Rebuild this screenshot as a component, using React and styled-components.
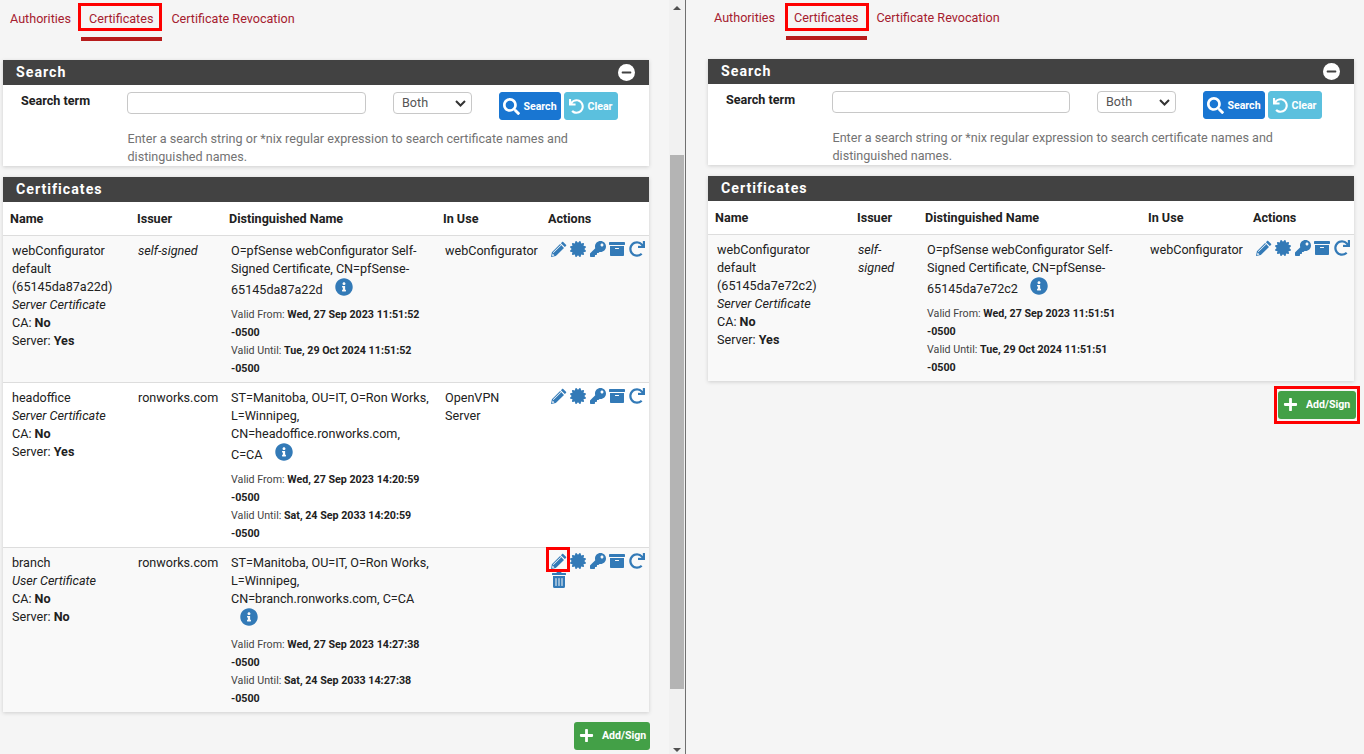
import React from 'react';
import styled, { createGlobalStyle } from 'styled-components';
import { FaCertificate, FaKey, FaArchive, FaRedo, FaTrashAlt, FaInfoCircle, FaSearch, FaUndo, FaPlus, FaMinus } from 'react-icons/fa';

const Global = createGlobalStyle`
  html, body { margin: 0; padding: 0; height: 100%; overflow: hidden; background: #f5f5f5; }
  body { font-family: Roboto, "Liberation Sans", sans-serif; font-size: 12.6px; line-height: 18px; color: #212121; }
`;

const Screen = styled.div`display: flex; width: 1364px; height: 754px; overflow: hidden;`;
const Pane = styled.div`
  flex: ${(props) => (props.$width ? `0 0 ${props.$width}px` : '1 1 0')};
  padding: ${(props) => props.$top}px 0 0 ${(props) => props.$left}px;
  box-sizing: border-box;
  min-width: 0;
  height: 754px;
  overflow: hidden;
`;
const Scrollbar = styled.div`
  flex: 0 0 16px;
  height: 754px;
  background: #f1f1f1;
  display: flex;
  flex-direction: column;
  align-items: center;
  box-sizing: border-box;
  padding-top: 6px;
`;
const ArrowUp = styled.div`width: 0; height: 0; border: 4px solid transparent; border-top: 0; border-bottom: 4px solid #505050;`;
const ArrowDown = styled.div`width: 0; height: 0; border: 4px solid transparent; border-bottom: 0; border-top: 4px solid #505050; margin-top: 59px;`;
const Thumb = styled.div`width: 14px; height: 534px; margin-top: 145px; background: #b4b4b4; flex: none;`;
const Divider = styled.div`flex: 0 0 1px; background: #707070; height: 754px;`;

const Tabs = styled.nav`display: flex; align-items: flex-start; height: 41px;`;
const Tab = styled.a`
  position: relative;
  display: block;
  box-sizing: border-box;
  padding: 9px ${(props) => props.$pr}px 0 ${(props) => props.$pl}px;
  height: 40px;
  color: #a5202f;
  border-bottom: ${(props) => (props.$active ? '4px solid #b71c1c' : '4px solid transparent')};
`;
const Mark = styled.span`
  position: absolute;
  border: 3px solid #fe0000;
  box-sizing: border-box;
  pointer-events: none;
  left: ${(props) => props.$l}px;
  top: ${(props) => props.$t}px;
  width: ${(props) => props.$w}px;
  height: ${(props) => props.$h}px;
`;

const Panel = styled.section`
  width: 646px;
  background: #fff;
  box-shadow: 0 1px 4px rgba(0,0,0,.16);
  margin-bottom: 11px;
`;
const Heading = styled.h2`
  margin: 0;
  height: 25px;
  background: #424242;
  color: #fff;
  font-size: 14.2px;
  font-weight: 700;
  letter-spacing: 1px;
  line-height: 25px;
  padding: 0 14px 0 13px;
  display: flex;
  justify-content: space-between;
  align-items: center;
`;
const Collapse = styled.span`
  width: 17px; height: 17px; border-radius: 50%; background: #fff; color: #424242;
  display: flex; align-items: center; justify-content: center; font-size: 11px;
`;
const SearchBody = styled.div`
  height: 81px;
  box-sizing: border-box;
  padding-top: 7px;
  display: grid;
  grid-template-columns: 124px ${(props) => props.$input}px 27px 79px 27px 62px 3px 54px;
  grid-template-rows: 28px 1fr;
`;
const Label = styled.label`font-weight: 700; padding: 1px 0 0 18px; line-height: 16px;`;
const TextInput = styled.input`
  box-sizing: border-box; width: 100%; height: 22px; border: 1px solid #c8c8c8; border-radius: 4px; background: #fff; margin: 0;
`;
const SelectBox = styled.div`
  box-sizing: border-box; width: 79px; height: 22px; border: 1px solid #c8c8c8; border-radius: 4px; background: #fff;
  display: flex; align-items: center; justify-content: space-between; padding: 0 5px 0 8px; color: #555; font-size: 12.6px;
`;
const Spacer = styled.span``;
const Btn = styled.button`
  box-sizing: border-box; height: 28px; border: 1px solid ${(props) => props.$bg}; border-radius: 3px; background: ${(props) => props.$bg};
  color: #fff; padding: 0; margin: 0; display: flex; align-items: center; justify-content: center; gap: 3px;
  font: 700 10.6px Roboto, sans-serif;
`;
const Help = styled.div`
  grid-column: 2 / -1; margin: 10px 0 0 0.5px; width: 490px; color: #737373; line-height: 18px;
`;

const Table = styled.table`width: 646px; table-layout: fixed; border-collapse: collapse; font-size: 12.6px;`;
const Th = styled.th`
  text-align: left; height: 33px; padding: 1px 0 0 8px; font-weight: 700; box-sizing: border-box;
  &:first-child { padding-left: 7px; }
`;
const Row = styled.tr`
  background: ${(props) => (props.$odd ? '#f9f9f9' : '#fff')};
`;
const Td = styled.td`vertical-align: top; padding: 6px 5px 4px 9px; line-height: 18px; border-top: 1px solid #ddd;`;
const WideTd = styled(Td)`padding-left: 10px;`;
const Em = styled.em`display: block;`;
const Valid = styled.div`margin-top: 7.6px; font-size: 10.7px; line-height: 18px; color: #444; b { color: #212121; }`;
const Info = styled.span`display: inline-flex; align-items: center; margin-left: 9px; vertical-align: -3px; color: #337ab7; font-size: 18px; height: 19px;`;
const Actions = styled.div`display: flex; flex-wrap: wrap; width: 100px; margin: -1px 0 0 -1px; color: #337ab7; font-size: 16px;`;
const Act = styled.span`position: relative; width: 19.5px; height: 19px; display: flex; align-items: flex-start; justify-content: center; box-sizing: border-box;`;
const AddRow = styled.div`width: ${(props) => props.$w}px; margin-top: -1px; display: flex; justify-content: flex-end;`;
const AddBtn = styled.button`
  position: relative; box-sizing: border-box; width: ${(props) => props.$w}px; height: 28px; border: 0; border-radius: 3px; background: #43a047;
  color: #fff; display: flex; align-items: center; padding: 0 0 0 5px; gap: 8px; font: 700 10.6px Roboto, sans-serif; margin: 0;
`;
const TabGap = styled.div`height: 18px;`;

const Pencil = () => (
  <svg width="16" height="16" viewBox="0 0 16 16" fill="#337ab7">
    <path d="M12.2.9 15 3.7c.4.4.4.8 0 1.2l-1.2 1.2-3.9-3.9L11.1.9c.3-.3.8-.3 1.1 0zM9.1 3 13 6.9 4.8 15.1 0 16l.9-4.8z" />
    <path d="M1.9 11.6 9.6 3.9l.5.5-7.7 7.7zM1.6 12.6l1.8 1.8-2.3.5z" fill="#fff" />
  </svg>
);

const actionIcons = [FaCertificate, FaKey, FaArchive, FaRedo];

function ActionIcons({ trash, mark }) {
  return (
    <Actions>
      <Act><Pencil />{mark && <Mark $l={-3} $t={-6} $w={24} $h={25} />}</Act>
      {actionIcons.map((Icon, i) => <Act key={i}><Icon /></Act>)}
      {trash && <Act><FaTrashAlt size={16} /></Act>}
    </Actions>
  );
}

function CertRow({ odd, name, type, ca, server, issuer, issuerEm, dn, from, until, inUse, trash, mark }) {
  return (
    <Row $odd={odd}>
      <Td>
        {name.map((n) => <div key={n}>{n}</div>)}
        <Em>{type}</Em>
        <div>CA: <b>{ca}</b></div>
        <div>Server: <b>{server}</b></div>
      </Td>
      <Td>{issuerEm ? <em>{issuer}</em> : issuer}</Td>
      <WideTd>
        {dn} <Info><FaInfoCircle /></Info>
        <Valid>Valid From: <b>{from}</b><br />Valid Until: <b>{until}</b></Valid>
      </WideTd>
      <WideTd>{inUse}</WideTd>
      <WideTd><ActionIcons trash={trash} mark={mark} /></WideTd>
    </Row>
  );
}

function Page({ cols, rows, tabs, input }) {
  return (
    <>
      <Tabs>
        <Tab $pl={tabs.a[0]} $pr={tabs.a[1]}>Authorities</Tab>
        <Tab $active $pl={8} $pr={9}>Certificates<Mark $l={tabs.box[0]} $t={tabs.box[1]} $w={tabs.box[2]} $h={28} /></Tab>
        <Tab $pl={9} $pr={0}>Certificate Revocation</Tab>
      </Tabs>
      <TabGap />
      <Panel>
        <Heading>Search<Collapse><FaMinus /></Collapse></Heading>
        <SearchBody $input={input}>
          <Label>Search term</Label>
          <TextInput />
          <Spacer />
          <SelectBox>Both<svg width="11" height="7" viewBox="0 0 11 7"><path d="M1 1l4.5 4.5L10 1" fill="none" stroke="#333" strokeWidth="2" /></svg></SelectBox>
          <Spacer />
          <Btn $bg="#1976d2"><FaSearch size={17} />Search</Btn>
          <Spacer />
          <Btn $bg="#5bc0de"><FaUndo size={15} />Clear</Btn>
          <Help>Enter a search string or *nix regular expression to search certificate names and distinguished names.</Help>
        </SearchBody>
      </Panel>
      <Panel>
        <Heading>Certificates</Heading>
        <Table>
          <colgroup>{cols.map((w, i) => <col key={i} width={w} />)}</colgroup>
          <thead>
            <tr><Th>Name</Th><Th>Issuer</Th><Th>Distinguished Name</Th><Th>In Use</Th><Th>Actions</Th></tr>
          </thead>
          <tbody>{rows.map((r, i) => <CertRow key={i} odd={i % 2 === 0} {...r} />)}</tbody>
        </Table>
      </Panel>
    </>
  );
}

const leftRows = [
  { name: ['webConfigurator', 'default', '(65145da87a22d)'], type: 'Server Certificate', ca: 'No', server: 'Yes', issuer: 'self-signed', issuerEm: true,
    dn: 'O=pfSense webConfigurator Self-Signed Certificate, CN=pfSense-65145da87a22d',
    from: 'Wed, 27 Sep 2023 11:51:52 -0500', until: 'Tue, 29 Oct 2024 11:51:52 -0500', inUse: 'webConfigurator' },
  { name: ['headoffice'], type: 'Server Certificate', ca: 'No', server: 'Yes', issuer: 'ronworks.com',
    dn: 'ST=Manitoba, OU=IT, O=Ron Works, L=Winnipeg, CN=headoffice.ronworks.com, C=CA',
    from: 'Wed, 27 Sep 2023 14:20:59 -0500', until: 'Sat, 24 Sep 2033 14:20:59 -0500', inUse: 'OpenVPN Server' },
  { name: ['branch'], type: 'User Certificate', ca: 'No', server: 'No', issuer: 'ronworks.com',
    dn: 'ST=Manitoba, OU=IT, O=Ron Works, L=Winnipeg, CN=branch.ronworks.com, C=CA',
    from: 'Wed, 27 Sep 2023 14:27:38 -0500', until: 'Sat, 24 Sep 2033 14:27:38 -0500', inUse: '', trash: true, mark: true },
];
const rightRows = [
  { name: ['webConfigurator', 'default', '(65145da7e72c2)'], type: 'Server Certificate', ca: 'No', server: 'Yes', issuer: 'self-signed', issuerEm: true,
    dn: 'O=pfSense webConfigurator Self-Signed Certificate, CN=pfSense-65145da7e72c2',
    from: 'Wed, 27 Sep 2023 11:51:51 -0500', until: 'Tue, 29 Oct 2024 11:51:51 -0500', inUse: 'webConfigurator' },
];

export default function App() {
  return (
    <Screen>
      <Global />
      <Pane $width={669} $top={1} $left={3}>
        <Page cols={[126, 92, 214, 105, 109]} rows={leftRows} input={239} tabs={{ a: [7, 10], box: [-3, 2, 84] }} />
        <AddRow $w={647}><AddBtn $w={76}><FaPlus size={15} />Add/Sign</AddBtn></AddRow>
      </Pane>
      <Scrollbar><ArrowUp /><Thumb /><ArrowDown /></Scrollbar>
      <Divider />
      <Pane $top={0} $left={22}>
        <Page cols={[141, 68, 223, 105, 109]} rows={rightRows} input={238} tabs={{ a: [6, 11], box: [-1, 3, 84] }} />
        <AddRow $w={648}><AddBtn $w={78}><FaPlus size={15} />Add/Sign<Mark $l={-4} $t={-5} $w={86} $h={38} /></AddBtn></AddRow>
      </Pane>
    </Screen>
  );
}
